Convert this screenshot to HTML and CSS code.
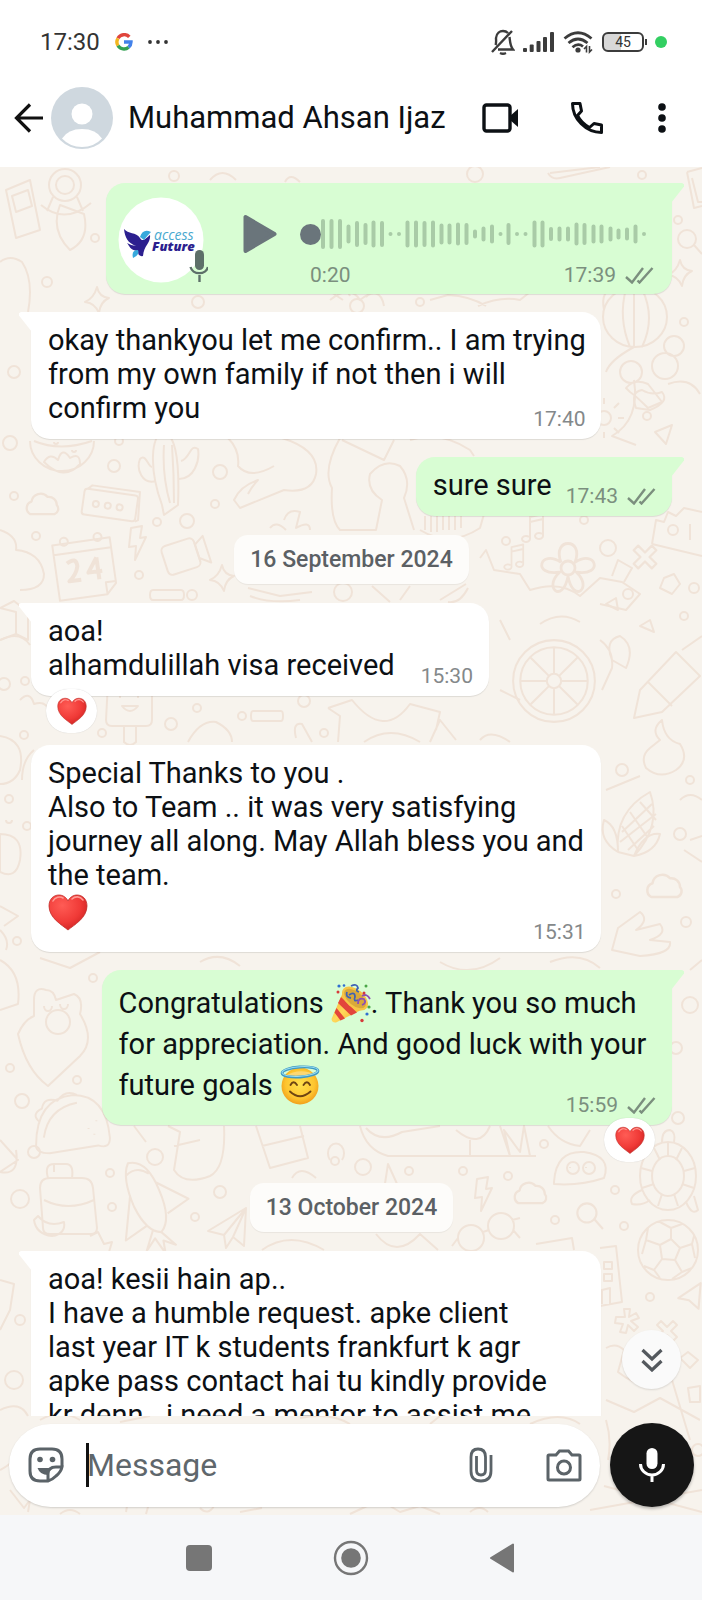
FILE: index.html
```html
<!DOCTYPE html>
<html lang="en">

<head>
    <meta charset="UTF-8">
    <meta name="viewport" content="width=device-width, initial-scale=1.0">
    <title>Muhammad Ahsan Ijaz</title>
    <link rel="stylesheet" href="styles.css">
</head>

<body>
    <!-- Shared icons -->
    <svg class="defs" width="0" height="0" aria-hidden="true">
        <defs>
            <radialGradient id="heart-fill" cx="0.35" cy="0.3" r="0.8">
                <stop offset="0" stop-color="#ff5c55" />
                <stop offset="0.6" stop-color="#f03a37" />
                <stop offset="1" stop-color="#c9201f" />
            </radialGradient>
            <radialGradient id="face-fill" cx="0.5" cy="0.45" r="0.6">
                <stop offset="0" stop-color="#ffe14d" />
                <stop offset="0.65" stop-color="#fdc52f" />
                <stop offset="1" stop-color="#ee9416" />
            </radialGradient>
            <linearGradient id="cone-fill" x1="0" y1="0" x2="1" y2="1">
                <stop offset="0" stop-color="#f5a623" />
                <stop offset="0.5" stop-color="#ffd95c" />
                <stop offset="1" stop-color="#f0a01c" />
            </linearGradient>
            <symbol id="heart" viewBox="0 0 40 40">
                <path d="M20 38C14 33 1 26 1 14C1 7 5.500 3 11 3C15 3 18.500 5.500 20 9C21.500 5.500 25 3 29 3C34.500 3 39 7 39 14C39 26 26 33 20 38Z" fill="url(#heart-fill)" stroke="#c0302c" stroke-width="0.8" />
                <path d="M5 9C7 5 12 4 15 6" fill="none" stroke="#ff9a94" stroke-width="1.600" stroke-linecap="round" />
                <path d="M24 7C27 4 32 4 35 8" fill="none" stroke="#ff9a94" stroke-width="1.600" stroke-linecap="round" />
            </symbol>
            <symbol id="ticks" viewBox="0 0 30 18">
                <path d="M2 11L8 16.500L19 2M13.500 14.500L15.500 16.500L28.500 2" fill="none" stroke="currentColor" stroke-width="2.400" />
            </symbol>
            <symbol id="mic" viewBox="0 0 26 36">
                <rect x="7.500" y="1" width="11" height="21" rx="5.500" fill="currentColor" />
                <path d="M1.500 17A11.500 11 0 0 0 24.500 17M13 28V35" fill="none" stroke="currentColor" stroke-width="3" />
            </symbol>
            <!-- wallpaper doodles -->
            <symbol id="d-bolt" viewBox="-15 -20 30 40" overflow="visible"><path d="M-6-15L5-17L3-5L9-6L-2 17L-1 3L-8 4Z" /></symbol>
            <symbol id="d-star" viewBox="-15 -15 30 30" overflow="visible"><path d="M0-13Q2-3 12-2Q3 2 2 13Q-2 3-12 2Q-3-2 0-13Z" /></symbol>
            <symbol id="d-cloud" viewBox="-20 -15 40 30" overflow="visible"><path d="M-11 8A6 6 0 0 1-10-3A8 8 0 0 1 4-7A7 7 0 0 1 12 0A5 5 0 0 1 10 8Z" /></symbol>
            <symbol id="d-glass" viewBox="-15 -15 30 30" overflow="visible"><path d="M6 5L14 14M-10-1a9 9 0 1 0 18 0a9 9 0 1 0-18 0" /></symbol>
            <symbol id="d-note" viewBox="-15 -20 30 40" overflow="visible"><path d="M-5 10V-12L8-15V7M-5-7L8-10M-5 10a4 3 0 1 1-1-2M8 7a4 3 0 1 1-1-2" /></symbol>
            <symbol id="d-flower" viewBox="-20 -20 40 40" overflow="visible"><path d="M-5 0a5 5 0 1 0 10 0a5 5 0 1 0-10 0M-5-4C-12-22 12-22 5-4C20-14 26 6 6 3C18 14 4 26 0 6C-4 26-18 14-6 3C-26 6-20-14-5-4" /></symbol>
            <symbol id="d-plane" viewBox="-20 -20 40 40" overflow="visible"><path d="M18-20L-20 3L-4 7L-2 20L5 9L16 18ZM18-20L-4 7M5 9L18-20" /></symbol>
            <symbol id="d-tri" viewBox="-15 -15 30 30" overflow="visible"><path d="M-11 2L10-12L8 12L-1 4Z" /></symbol>
            <symbol id="d-cross" viewBox="-15 -15 30 30" overflow="visible"><path d="M-10-6L-6-10L0-4L6-10L10-6L4 0L10 6L6 10L0 4L-6 10L-10 6L-4 0Z" /></symbol>
            <symbol id="d-aster" viewBox="-15 -15 30 30" overflow="visible"><path d="M-2-4L-3-12H3L2-4L9-8L12-3L4 0L11 6L7 10L1 4L-1 12L-7 11L-4 3L-12 2L-11-4Z" /></symbol>
            <symbol id="d-cactus" viewBox="-35 -45 70 90" overflow="visible"><path d="M-8 30C-22-8-18-40-8-42C4-44 10-20 8 30L-6 40ZM-14 6C-28 10-34-6-30-16C-24-22-22-8-18-8M9 4C24 4 30-14 28-26C20-32 20-16 11-14M-6-30Q-8 0 0 28M2-30Q4 0 4 28" /></symbol>
            <symbol id="d-bag" viewBox="-35 -40 70 80" overflow="visible"><path d="M-28-14Q-28-24-18-24H14Q24-24 25-14L29 26Q29 32 23 32H-18Q-25 32-25 26ZM-24-2Q0 10 26-2M-20-24Q-24-38-14-38H-2Q6-38 4-24M-14-38V-30M-30 14Q-20 26-4 20Q-2 32-16 34Q-32 32-34 18Z" /></symbol>
            <symbol id="d-rocket" viewBox="-35 -45 70 90" overflow="visible"><path d="M-24-40Q-6-44 6-14Q18 14 8 26Q-6 26-18 2Q-30-26-24-40ZM-26-28Q-16-38-4-30M2-22L34-6L14 8M-22-8L-26 34L-6 20M8 26L22 38L10 34L12 46L2 32L-6 44L0 24" /></symbol>
            <symbol id="d-wheel" viewBox="-45 -45 90 90" overflow="visible"><path d="M-40 0a40 40 0 1 0 80 0a40 40 0 1 0-80 0M-33 0a33 33 0 1 0 66 0a33 33 0 1 0-66 0M-7 0a7 7 0 1 0 14 0a7 7 0 1 0-14 0M0-7V-33M0 7V33M7 0H33M-7 0H-33M5-5L23-23M-5 5L-23 23M5 5L23 23M-5-5L-23-23" /></symbol>
            <symbol id="d-ball" viewBox="-32 -32 64 64" overflow="visible"><path d="M-30 0a30 30 0 1 0 60 0a30 30 0 1 0-60 0M-8-5L3-11L12-2L7 10L-6 9ZM3-11V-22M12-2L24-6M7 10L14 22M-6 9L-14 20M-8-5L-22-10M-8-28L3-22L14-26M24-6L27 8M24-6L26-14M14 22L4 29M14 22L24 18M-14 20L-24 16M-14 20L-8 28M-22-10L-26 4M-22-10L-20-22" /></symbol>
            <symbol id="d-pizza" viewBox="-40 -35 80 70" overflow="visible"><path d="M-38 20Q-38-28 0-32Q34-32 38 12Q38 24 26 20L-24 28Q-38 28-38 20ZM-30 12Q-26-18 4-24M-34-4Q-44-12-32-18Q-30-30-16-26Q-8-38 4-32M16 2v1M24-6v1M22 8v1" /></symbol>
            <symbol id="d-corn" viewBox="-35 -40 70 80" overflow="visible"><path d="M-14 22Q-18-18 18-38Q30-4 2 26ZM-14 22Q-34 10-28-10Q-14-4-14 22ZM2 26Q24 22 28 4Q12 2 2 26ZM-10 2L20-26M-12 12L24-16M-4 20L22-4M-2-18L16 8M8-28L24-10M-10-4L6 20" /></symbol>
            <symbol id="d-pop" viewBox="-25 -40 50 80" overflow="visible"><path d="M-22-30Q-22-38 0-38Q22-38 22-26V8Q22 14 16 14H-18Q-24 14-24 8ZM-6 14V30Q0 36 6 30V14M-10-16v2M8-16v2M-8-6Q0 4 8-6Z" /></symbol>
        </defs>
    </svg>

    <div class="phone">
        <!-- Status bar -->
        <div class="status-bar">
            <div class="status-left">
                <span>17:30</span>
                <svg width="18" height="18" viewBox="0 0 18 18" fill="none" stroke-width="3.400">
                    <path d="M14.300 3.900A7 7 0 0 0 3 5.300" stroke="#e0453c" />
                    <path d="M3 5.300A7 7 0 0 0 3 12.700" stroke="#f3b61f" />
                    <path d="M3 12.700A7 7 0 0 0 13.600 14.200" stroke="#34a253" />
                    <path d="M13.600 14.200A7 7 0 0 0 16 9H9" stroke="#4382ea" />
                </svg>
                <svg width="20" height="6" viewBox="0 0 20 6" fill="#333">
                    <circle cx="2" cy="3" r="1.900" /><circle cx="10" cy="3" r="1.900" /><circle cx="18" cy="3" r="1.900" />
                </svg>
            </div>
            <div class="status-right">
                <svg width="24" height="26" viewBox="0 0 24 26" fill="none" stroke="#3c3c3c" stroke-width="2.400">
                    <path d="M1 23L21 2M4.500 16C5.500 14 5 11 5 9C5.500 4 9 2 12 2C14 2 15.500 2.500 17 4M18.500 8C19 12 19 17 22 20.500H7M9 24Q12 25.500 15 24" />
                </svg>
                <svg width="32" height="22" viewBox="0 0 32 22" fill="#3c3c3c">
                    <rect x="0" y="17" width="4" height="4" rx="1" /><rect x="6.700" y="13.500" width="4" height="7.500" rx="1" /><rect x="13.500" y="10" width="4" height="11" rx="1" /><rect x="20" y="6" width="4" height="15" rx="1" /><rect x="27" y="1" width="4" height="20" rx="1" />
                </svg>
                <svg width="30" height="24" viewBox="0 0 30 24" fill="none" stroke="#3c3c3c" stroke-width="2.800">
                    <path d="M1.500 8.500Q15-3 28.500 8.500M5.500 13Q15 5 24.500 13M9.500 17.200Q15 12.500 20 16.500" />
                    <circle cx="15" cy="20" r="2.600" fill="#3c3c3c" stroke="none" />
                    <path d="M23.500 22.500V16.500L21 19M26.500 16V22L29 19.500" stroke-width="1.600" />
                </svg>
                <span class="battery">45</span>
                <span class="cam-dot"></span>
            </div>
        </div>

        <!-- Chat header -->
        <header class="chat-header">
            <button class="icon-btn back" aria-label="Back">
                <svg width="30" height="30" viewBox="0 0 30 30" fill="none" stroke="#111" stroke-width="3.200"><path d="M29 15H3M16 1.500L2.500 15L16 28.500" /></svg>
            </button>
            <svg class="avatar" width="62" height="62" viewBox="0 0 62 62">
                <circle cx="31" cy="31" r="31" fill="#cfd8df" />
                <circle cx="31" cy="27" r="10.500" fill="#fff" />
                <path d="M11 51.500Q17 42 31 42Q45 42 51 51.500Q43 60 31 60Q19 60 11 51.500Z" fill="#fff" />
            </svg>
            <h1 class="contact-name">Muhammad Ahsan Ijaz</h1>
            <button class="icon-btn video" aria-label="Video call">
                <svg width="37" height="30" viewBox="0 0 37 30"><rect x="2" y="2" width="26" height="26" rx="2.500" fill="none" stroke="#0c1014" stroke-width="3.400" /><path d="M28 13L36 6V24L28 17Z" fill="#0c1014" /></svg>
            </button>
            <button class="icon-btn call" aria-label="Voice call">
                <svg width="34" height="34" viewBox="0 0 34 34" fill="none" stroke="#0c1014" stroke-width="3" stroke-linejoin="round"><path d="M2.500 2.500H10L11.500 10L7.500 14.500C10 19.500 14.500 24 19.500 26.500L24 22.500L31.500 24V31.500C16 31.500 2.500 18 2.500 2.500Z" /></svg>
            </button>
            <button class="icon-btn more" aria-label="More options">
                <svg width="8" height="30" viewBox="0 0 8 30" fill="#0c1014"><circle cx="4" cy="4" r="3.800" /><circle cx="4" cy="15" r="3.800" /><circle cx="4" cy="26" r="3.800" /></svg>
            </button>
        </header>

        <main class="chat">
            <svg class="wallpaper" viewBox="0 167 702 1348" preserveAspectRatio="xMidYMin slice" aria-hidden="true">
                <!-- top -->
                <g transform="translate(65 185)"><path d="M-16 0a16 16 0 1 0 32 0a16 16 0 1 0-32 0M-9 0a9 9 0 1 0 18 0a9 9 0 1 0-18 0M-12 12L-18 26M12 12L18 26M-24 20Q0 40 26 18" /></g>
                <path d="M6 190L30 180L40 230L16 238ZM12 196L28 190L32 206L16 212ZM550 173L600 167M548 173Q552 180 560 178L610 167M687 172L702 168M687 172L694 208L702 206M692 178L698 202H702M0 262Q10 254 22 262Q34 280 28 312M60 205Q50 230 70 250Q90 240 84 214Z" />
                <path d="M210 180Q222 166 236 180M285 182Q290 172 300 182M330 300Q350 284 360 300Q380 284 384 306M350 306a7 7 0 1 0 14 0a7 7 0 1 0-14 0M343 300L328 290M350 296L346 288M366 297L374 289M478 306Q500 296 520 300L530 292M430 300L448 295Q470 296 486 306" />
                <path d="M603 317a32 30 0 1 0 64 0a32 30 0 1 0-64 0M626 289Q618 318 630 347M642 289Q656 318 642 347M634 287V347M634 347Q610 360 606 372M604 310Q600 290 616 286" />
                <use href="#d-glass" x="673" y="225" width="30" height="30" />
                <use href="#d-star" x="665" y="258" width="30" height="30" />
                <use href="#d-star" x="82" y="285" width="30" height="30" />
                <!-- first rows -->
                <path d="M620 372a11 11 0 1 1 22 0a11 11 0 1 1-22 0M652 366a13 13 0 1 1 26 0a13 13 0 1 1-26 0M626 388Q634 378 648 384L662 402L648 408Q636 396 630 392ZM668 384Q690 376 700 394M636 408Q630 392 642 390Q652 396 662 392Q670 402 650 410ZM664 346a10 10 0 1 1 20 0a10 10 0 1 1-20 0M655 432L672 425L666 444Z" />
                <path d="M597 418a6 6 0 1 1 14 0a6 6 0 1 1-14 0M604 404v-6M604 432v6M590 418h-6M618 418h6M594 408l-5-5M614 408l5-5M594 428l-5 5M614 428l5 5M636 445L612 436Q640 420 634 380" />
                <path d="M30 441a32 30 0 1 0 64 0M44 462Q50 452 58 460Q62 446 70 458Q80 452 80 464Q64 482 44 462ZM54 442a2 2 0 1 0 4 0M72 450a2 2 0 1 0 4 0M34 441Q60 452 92 441" />
                <use href="#d-cactus" x="135" y="430" width="70" height="90" />
                <g transform="translate(110 504) rotate(8)"><rect x="-27" y="-12" width="54" height="26" rx="3" /><circle cx="-14" cy="2" r="3" /><circle cx="-2" cy="2" r="3" /><circle cx="10" cy="2" r="3" /><path d="M-24-12L-20-16H28L30 12L27 14" /></g>
                <use href="#d-cloud" x="20" y="487" width="46" height="36" />
                <path d="M228 438Q240 450 238 466Q250 480 274 466M282 438Q320 450 316 474Q312 494 284 490L240 508L234 500Q240 486 258 480Q252 486 248 494M340 438Q322 470 332 488Q330 520 340 530H376L382 500Q366 490 370 474Q384 458 400 466Q412 480 404 498L414 530M342 440L384 460L394 440M410 440Q440 430 470 450L474 456M284 520Q288 508 300 512L296 528Q310 520 310 530M270 528Q276 520 286 530M425 516V530M431 516V532M437 516V532M443 516V530M449 516V530M455 516V530M461 516V528M420 530Q450 548 480 528L484 514" />
                <g transform="translate(85 563) rotate(-8)"><path d="M-30-22H28V24L18 34H-30ZM28 22H18V34M-30-12H28" /><circle cx="-18" cy="-24" r="4" /><circle cx="16" cy="-24" r="4" /><path d="M-18-2Q-8-8-8 2Q-10 10-18 16H-6M12-4L2 10H16M12-4V18" stroke-width="4" /></g>
                <use href="#d-bolt" x="122" y="523" width="30" height="40" />
                <g transform="translate(186 556) rotate(-18)"><rect x="-22" y="-16" width="34" height="30" rx="5" /><path d="M12-8L22-14V14L12 6M12-10V10" /></g>
                <path d="M0 530Q18 536 16 550Q40 552 44 574Q44 590 20 590M0 608L14 601L28 612V640L16 634L0 640M16 634V612L0 608M153 590h28q3 0 3 5t-3 5h-28q-3 0-3-5t3-5M248 588L280 596L312 592M250 596Q270 604 300 600M372 586L390 602M400 600L410 586M440 600L466 584M448 602Q460 604 468 588" />
                <use href="#d-star" x="207" y="563" width="30" height="30" />
                <use href="#d-note" x="520" y="509" width="30" height="40" />
                <use href="#d-note" x="502" y="540" width="28" height="36" />
                <use href="#d-flower" x="540" y="540" width="56" height="56" />
                <use href="#d-cross" x="628" y="540" width="34" height="34" />
                <path d="M652 544L656 520L664 522L668 512L676 516L684 508L702 512M652 544L702 556M668 530a5 5 0 1 0 10 0a5 5 0 1 0-10 0M690 524V540M480 558L486 550L494 570L520 574L530 590Q560 580 580 596L600 578L622 582L640 594L626 610L600 604M612 576L618 560L632 568L624 582M664 578L674 574L680 584L672 594L660 588Z" />
                <!-- middle -->
                <use href="#d-wheel" x="508" y="635" width="92" height="92" />
                <path d="M500 690L520 700M500 620L510 640M600 640Q614 650 612 668L602 690M540 624Q560 610 580 622M606 604L616 598L618 610ZM640 690L676 652L700 676L662 712L634 718ZM648 682L672 706M682 650L702 636M640 626L650 620L654 632ZM612 660Q604 640 620 636Q636 646 626 668Z" />
                <use href="#d-pop" x="105" y="672" width="50" height="80" />
                <path d="M0 640Q20 630 30 645M20 700Q30 690 34 704Q46 700 50 712M253 711h28q2 0 2 5t-2 5h-28q-2 0-2-5t2-5M188 742Q200 720 216 722Q232 730 232 742M328 708L352 700Q384 740 410 704L440 712L436 730M328 708L340 716L338 742M296 738Q292 722 302 724L312 742M364 742Q390 724 420 742M480 740Q490 728 510 742M0 736Q26 740 20 770Q14 784 0 784M22 780Q22 760 34 750M430 742L440 720L456 740" />
                <path d="M0 834Q24 834 20 860Q16 880 0 872ZM0 906L18 916L4 926M6 820a3 3 0 1 0 6 0M0 930Q10 940 6 950M660 740Q650 730 662 720Q664 740 680 744Q690 760 676 770Q660 780 646 768Q640 756 650 748ZM606 790L640 776" />
                <use href="#d-corn" x="597" y="790" width="70" height="80" />
                <use href="#d-cloud" x="640" y="868" width="50" height="38" />
                <path d="M618 928L640 912Q650 920 636 930L660 924Q668 934 650 940L670 942Q672 954 640 956L612 950ZM0 960Q22 972 18 1004L0 1010M690 840L702 836M684 850L702 862M680 800Q690 790 702 800M40 958L70 968L100 952M200 962Q220 950 240 966M440 962Q470 980 500 958M550 962Q580 950 600 968M690 970L702 960" />
                <!-- lower -->
                <path d="M34 1000Q34 986 46 990Q54 990 56 1000L74 994Q84 998 80 1014Q96 1040 80 1056L48 1086Q26 1070 18 1034Q24 1020 34 1016ZM46 1022a12 12 0 1 0 24 0a12 12 0 1 0-24 0M44 1006a4 5 0 1 0 8 0M60 1004a4 5 0 1 0 8 0" />
                <use href="#d-pizza" x="32" y="1092" width="82" height="68" />
                <path d="M134 1126L146 1142M136 1124L144 1120M168 1126L180 1132L174 1170Q184 1186 210 1176Q226 1168 224 1126M174 1146L200 1140M256 1126L270 1168L308 1158L300 1126M262 1146L304 1136M360 1126Q366 1150 388 1156H536M366 1128Q380 1144 402 1132L440 1126M470 1140V1156M500 1126L510 1156L504 1130L520 1152L524 1126L530 1156M456 1130Q480 1150 490 1126M548 1126Q560 1144 580 1146L590 1130M0 1140L18 1160L0 1172M0 1172Q20 1176 16 1150" />
                <path d="M554 1182Q556 1150 584 1152Q612 1156 604 1178Q580 1186 554 1184ZM567 1168a6 6 0 1 0 12 0a6 6 0 1 0-12 0M583 1168a6 6 0 1 0 12 0a6 6 0 1 0-12 0M570 1167v1M586 1167v1" />
                <g transform="translate(668 1176)"><ellipse rx="28" ry="34" /><ellipse rx="16" ry="20" /><path d="M0-34V-20M14-28L8-16M-14-28L-8-16M27-8L16-5M-27-8L-16-5M26 12L14 8M-26 12L-14 8M10 30L6 18M-10 30L-6 18M-6-34Q-6-46 2-46Q8-44 6-34M-26 14Q-40 20-36 28Q-26 30-18 24M18 26Q24 40 30 34L26 20M-24-18Q-36-24-32-30Q-24-32-16-26" /></g>
                <use href="#d-bag" x="33" y="1162" width="70" height="80" />
                <use href="#d-rocket" x="115" y="1158" width="76" height="94" />
                <use href="#d-plane" x="208" y="1208" width="40" height="40" />
                <use href="#d-bolt" x="468" y="1174" width="30" height="40" />
                <use href="#d-cloud" x="508" y="1176" width="46" height="36" />
                <use href="#d-glass" x="572" y="1198" width="32" height="32" />
                <path d="M458 1238a13 13 0 1 1 26 0a13 13 0 1 1-26 0M488 1226a13 13 0 1 1 26 0a13 13 0 1 1-26 0M483 1232L489 1230M513 1230L520 1238M458 1238L452 1246M512 1220L520 1218M384 1190L388 1164L398 1186ZM292 1178Q300 1164 316 1178M330 1160a8 10 0 1 1 12 0M90 1236L98 1232L104 1244L112 1242L106 1262M262 1250Q290 1230 324 1250M376 1234Q396 1260 420 1234L438 1250M536 1244L572 1238L574 1250M600 1248L616 1246L622 1302L600 1306M604 1262h8v7h-8ZM604 1274h8v7h-8ZM602 1304V1290L610 1288V1304" />
                <use href="#d-ball" x="636" y="1218" width="64" height="64" />
                <use href="#d-aster" x="612" y="1306" width="30" height="30" />
                <use href="#d-cross" x="652" y="1316" width="30" height="30" />
                <use href="#d-tri" x="674" y="1280" width="32" height="32" />
                <path d="M606 1348Q616 1342 624 1350L618 1372Q640 1390 664 1384Q680 1370 670 1352M606 1400L634 1412L660 1398L700 1420M680 1358L688 1352L698 1360L690 1368ZM688 1388L700 1386V1402H690ZM672 1380L690 1440M606 1420Q612 1440 608 1460M0 1280L14 1284L10 1310L0 1330M0 1410Q20 1400 28 1416M0 1470Q20 1460 26 1440M10 1490L24 1508L30 1500L28 1512M60 1514Q70 1506 80 1514M128 1500L126 1512M150 1500L146 1514M200 1508Q208 1516 214 1506M240 1512L262 1508M350 1514L380 1500L400 1512L420 1506L440 1514M470 1512Q480 1504 488 1512M590 1510L702 1490M604 1486L702 1512M40 1420Q60 1408 80 1420M120 1422L150 1416M300 1418Q330 1412 350 1424M430 1424L440 1416M530 1424Q560 1410 580 1424" />
                <!-- loose dots -->
                <g>
                    <circle cx="47" cy="282" r="5" /><circle cx="95" cy="238" r="4" /><circle cx="174" cy="176" r="5" /><circle cx="475" cy="174" r="8" /><circle cx="642" cy="175" r="4" /><circle cx="678" cy="220" r="4" /><circle cx="420" cy="302" r="4" /><circle cx="198" cy="302" r="6" />
                    <circle cx="684" cy="322" r="4" /><circle cx="10" cy="443" r="7" /><circle cx="119" cy="441" r="4" /><circle cx="114" cy="466" r="6" /><circle cx="220" cy="472" r="7" /><circle cx="215" cy="504" r="4" /><circle cx="14" cy="496" r="4" /><circle cx="187" cy="521" r="7" /><circle cx="157" cy="522" r="4" /><circle cx="36" cy="536" r="4" /><circle cx="139" cy="575" r="4" /><circle cx="192" cy="595" r="5" />
                    <circle cx="647" cy="416" r="4" /><circle cx="14" cy="372" r="6" /><circle cx="506" cy="541" r="4" /><circle cx="608" cy="548" r="8" /><circle cx="584" cy="520" r="4" /><circle cx="628" cy="594" r="5" /><circle cx="694" cy="588" r="5" /><circle cx="343" cy="592" r="9" /><circle cx="684" cy="616" r="4" />
                    <circle cx="25" cy="681" r="4" /><circle cx="4" cy="684" r="6" /><circle cx="197" cy="708" r="4" /><circle cx="242" cy="716" r="4" /><circle cx="304" cy="701" r="6" /><circle cx="171" cy="724" r="6" /><circle cx="102" cy="733" r="4" /><circle cx="24" cy="735" r="4" /><circle cx="324" cy="733" r="4" /><circle cx="9" cy="799" r="4" /><circle cx="27" cy="826" r="4" /><circle cx="17" cy="941" r="4" /><circle cx="622" cy="770" r="6" /><circle cx="690" cy="780" r="4" /><circle cx="680" cy="834" r="6" /><circle cx="616" cy="894" r="4" /><circle cx="686" cy="922" r="5" />
                    <circle cx="93" cy="978" r="4" /><circle cx="77" cy="1080" r="4" /><circle cx="22" cy="1101" r="7" /><circle cx="10" cy="1068" r="4" /><circle cx="34" cy="1152" r="6" /><circle cx="155" cy="1157" r="8" /><circle cx="110" cy="1173" r="4" /><circle cx="20" cy="1199" r="9" /><circle cx="220" cy="1192" r="6" /><circle cx="335" cy="1161" r="4" /><circle cx="363" cy="1167" r="8" /><circle cx="409" cy="1171" r="4" /><circle cx="463" cy="1171" r="4" /><circle cx="508" cy="1176" r="4" /><circle cx="195" cy="1217" r="4" /><circle cx="112" cy="1207" r="4" /><circle cx="544" cy="1144" r="4" /><circle cx="555" cy="1220" r="4" /><circle cx="624" cy="1226" r="4" /><circle cx="615" cy="1190" r="4" /><circle cx="678" cy="1118" r="6" /><circle cx="676" cy="1048" r="6" /><circle cx="20" cy="1320" r="5" /><circle cx="14" cy="1380" r="9" /><circle cx="650" cy="1297" r="4" /><circle cx="698" cy="1450" r="6" /><circle cx="690" cy="1005" r="8" />
                </g>
            </svg>

            <section class="messages">
                <!-- Voice note -->
                <article class="msg out tail voice">
                    <svg class="voice-logo" width="90" height="86" viewBox="0 0 90 86">
                        <circle cx="43" cy="43" r="42.500" fill="#fff" />
                        <path d="M6 32C10 37 18 35 22 41C25 46 28 41 32 38C33 46 26 48 25 59Q20 60 20 54C11 53 12 49 9 46Q14 49 18 49C10 46 7 41 6 32Z" fill="#2c1f8f" />
                        <path d="M22 40Q25 31 33 35Q29 39 26 43Z" fill="#37a9dc" />
                        <path d="M15 61Q13 53 20 53Q22 58 15 61Z" fill="#37a9dc" />
                        <text class="logo-light" x="36" y="43">access</text>
                        <text class="logo-bold" x="34" y="54">Future</text>
                        <rect x="77" y="53" width="9" height="20" rx="4.500" fill="#5d6f69" />
                        <path d="M72.500 70A9 8 0 0 0 90 70" fill="none" stroke="#5d6f69" stroke-width="2.400" />
                        <path d="M81.500 78V85" stroke="#5d6f69" stroke-width="2.400" />
                    </svg>
                    <button class="icon-btn play" aria-label="Play voice message">
                        <svg width="34" height="40" viewBox="0 0 34 40"><path d="M2.500 3V37L31.500 20Z" fill="#6a757b" stroke="#6a757b" stroke-width="4" stroke-linejoin="round" /></svg>
                    </button>
                    <div class="voice-body">
                        <div class="seek">
                            <svg width="356" height="40" viewBox="0 0 356 40" fill="none" stroke="#a9cba7" stroke-width="4" stroke-linecap="round">
                                <path d="M25 7v26M33.500 7v26M42 7v26M50.500 12.500v15M59 9v22M67.500 11v18M75.500 8.500v23M84 9v22M92.500 20v0.010M101 20v0.010M109.500 8.500v23M118 8.500v23M126.500 9v22M135 8.500v23M143.500 11.500v17M151.500 11.500v17M160 10.500v19M168.500 11v18M177 17.500v5M185.500 14.500v11M194 12.500v15M202.500 20v0.010M210.500 11v18M219 20v0.010M227.500 20v0.010M236.500 8.500v23M244.500 8.500v23M253 15v10M261.500 14.500v11M270 14.500v11M278.500 10.500v19M286.500 11v18M295.500 12.500v15M303.500 12.500v15M312.500 14.500v11M320.500 16.500v7M329 15.500v9M337.500 12.500v15M346 20v0.010" />
                            </svg>
                            <input type="range" min="0" max="20" value="0" aria-label="Seek">
                        </div>
                        <div class="voice-meta">
                            <span>0:20</span>
                            <span class="stamp">17:39 <svg width="30" height="18"><use href="#ticks" /></svg></span>
                        </div>
                    </div>
                </article>

                <article class="msg in tail">
                    okay thankyou let me confirm.. I am trying from my own family if not then i will confirm you
                    <span class="meta">17:40</span>
                </article>

                <article class="msg out tail">
                    sure sure
                    <span class="meta">17:43 <svg width="30" height="18"><use href="#ticks" /></svg></span>
                </article>

                <div class="date">16 September 2024</div>

                <article class="msg in tail reacted">
                    aoa!<br>
                    alhamdulillah visa received
                    <span class="meta wide">15:30</span>
                    <span class="reaction"><svg width="30" height="30"><use href="#heart" /></svg></span>
                </article>

                <article class="msg in same has-emoji">
                    Special Thanks to you .<br>
                    Also to Team .. it was very satisfying journey all along. May Allah bless you and the team.<br>
                    <svg class="emoji" width="40" height="40"><use href="#heart" /></svg>
                    <span class="meta">15:31</span>
                </article>

                <article class="msg out tail reacted has-emoji tall">
                    Congratulations
                    <svg class="emoji" width="40" height="40" viewBox="0 0 40 40">
                        <path d="M13 7L0.500 36Q1 40 5 39.500L34 25Q32 12 13 7Z" fill="url(#cone-fill)" />
                        <path d="M10 14L26 29.500L20 32.500L7 20ZM5.500 25L14 35.500L9.500 37.500L3.500 29.500Z" fill="#e2453c" />
                        <ellipse cx="24" cy="15.500" rx="14" ry="8" transform="rotate(40 24 15.500)" fill="#d9a93a" />
                        <ellipse cx="24" cy="15.500" rx="14" ry="8" transform="rotate(40 24 15.500)" fill="none" stroke="#f6c546" stroke-width="2.200" />
                        <path d="M18 12Q24 8 24 14Q22 19 27 17M20 3Q26 0 27 5Q24 8 28 9M16 9Q14 14 20 15" fill="none" stroke="#3f62b5" stroke-width="1.800" />
                        <path d="M27 21Q27 14 33 16Q36 20 31 22M31 13Q36 10 39 16" fill="none" stroke="#8d4fb4" stroke-width="1.800" />
                        <g fill="#2f6fd0"><circle cx="8" cy="3" r="1.600" /><circle cx="36" cy="31" r="1.600" /><circle cx="13" cy="2.500" r="1.300" /></g>
                        <g fill="#d63a3a"><circle cx="7" cy="9" r="1.500" /><circle cx="33" cy="10" r="1.500" /><circle cx="31" cy="37.500" r="1.700" /></g>
                        <g fill="#4aa648"><circle cx="35" cy="3" r="1.500" /><circle cx="38" cy="24" r="1.600" /></g>
                    </svg>. Thank you so much for appreciation. And good luck with your future goals
                    <svg class="emoji" width="40" height="40" viewBox="0 0 40 40">
                        <circle cx="20" cy="21" r="18.500" fill="url(#face-fill)" />
                        <path d="M5 11Q20 2 36 10Q22 16 5 11Z" fill="#fbd774" />
                        <ellipse cx="20" cy="7" rx="18" ry="5" transform="rotate(-4 20 7)" fill="none" stroke="#3f9ac4" stroke-width="2.800" />
                        <ellipse cx="20" cy="6.500" rx="18" ry="4.800" transform="rotate(-4 20 6.500)" fill="none" stroke="#9adcf0" stroke-width="1" />
                        <path d="M10.500 20Q13.500 14.500 17 20M23.500 20Q27 14.500 30 20M10 26.500Q20 36 30.500 26.500" fill="none" stroke="#6e4512" stroke-width="1.900" stroke-linecap="round" />
                    </svg>
                    <span class="meta">15:59 <svg width="30" height="18"><use href="#ticks" /></svg></span>
                    <span class="reaction"><svg width="30" height="30"><use href="#heart" /></svg></span>
                </article>

                <div class="date">13 October 2024</div>

                <article class="msg in tail full">
                    aoa! kesii hain ap..<br>
                    I have a humble request. apke client<br>
                    last year IT k students frankfurt k agr<br>
                    apke pass contact hai tu kindly provide<br>
                    kr denn.. i need a mentor to assist me
                </article>

                <button class="icon-btn scroll-down" aria-label="Scroll to bottom">
                    <svg width="22" height="24" viewBox="0 0 22 24" fill="none" stroke="#54595e" stroke-width="3.200"><path d="M1.500 2L11 11L20.500 2M1.500 13L11 22L20.500 13" /></svg>
                </button>
            </section>

            <!-- Composer -->
            <form class="composer">
                <div class="field">
                    <button type="button" class="icon-btn" aria-label="Stickers">
                        <svg width="36" height="36" viewBox="0 0 36 36" fill="none" stroke="#5b6368" stroke-width="3"><path d="M34 20V12Q34 2 24 2H12Q2 2 2 12V24Q2 34 12 34H20Q24 33 28 29Q33 25 34 20H28Q20 20 20 27V34" /><circle cx="12" cy="12.500" r="2.800" fill="#5b6368" stroke="none" /><circle cx="24.500" cy="12.500" r="2.800" fill="#5b6368" stroke="none" /><path d="M9.500 21H26Q20 22 20 28Q12 28 9.500 21Z" fill="#5b6368" stroke="none" /></svg>
                    </button>
                    <span class="caret"></span>
                    <input class="message-input" type="text" placeholder="Message" aria-label="Message">
                    <button type="button" class="icon-btn attach" aria-label="Attach">
                        <svg width="24" height="36" viewBox="0 0 24 36" fill="none" stroke="#5b6368" stroke-width="2.800"><path d="M22 8V24Q22 34 12 34Q2 34 2 24V10Q2 2 9 2Q16.500 2 16.500 10V23Q16.500 28 12 28Q7.500 28 7.500 23V9" /></svg>
                    </button>
                    <button type="button" class="icon-btn camera" aria-label="Camera">
                        <svg width="36" height="33" viewBox="0 0 36 33" fill="none" stroke="#5b6368" stroke-width="3"><path d="M2 7Q2 6 3 6H10L13.500 2H22.500L26 6H33Q34 6 34 7V30Q34 31 33 31H3Q2 31 2 30Z" /><circle cx="18" cy="18.500" r="6.500" /></svg>
                    </button>
                </div>
                <button type="button" class="icon-btn record" aria-label="Record voice message">
                    <svg width="26" height="36"><use href="#mic" /></svg>
                </button>
            </form>
        </main>

        <!-- Android navigation -->
        <nav class="nav-bar">
            <button class="icon-btn" aria-label="Recents"><svg width="26" height="26"><rect width="26" height="26" rx="4" fill="#767676" /></svg></button>
            <button class="icon-btn" aria-label="Home"><svg width="36" height="36" viewBox="0 0 36 36"><circle cx="18" cy="18" r="16" fill="none" stroke="#767676" stroke-width="2.400" /><circle cx="18" cy="18" r="9.800" fill="#767676" /></svg></button>
            <button class="icon-btn" aria-label="Back"><svg width="26" height="30" viewBox="0 0 26 30"><path d="M24 1.500V28.500L2 15Z" fill="#767676" stroke="#767676" stroke-width="2" stroke-linejoin="round" /></svg></button>
        </nav>
    </div>
</body>

</html>
```
FILE: styles.css
```css
* {
    box-sizing: border-box;
}

body {
    margin: 0;
    font-family: Roboto, "Liberation Sans", sans-serif;
    color: #0c1014;
    background: #fff;
}

svg {
    display: block;
    flex: none;
}

.defs {
    position: absolute;
}

.phone {
    height: 100vh;
    display: flex;
    flex-direction: column;
}

.icon-btn {
    flex: none;
    display: grid;
    place-items: center;
    padding: 0;
    border: 0;
    background: none;
    color: inherit;
    cursor: pointer;
}

/* Status bar */
.status-bar {
    height: 69px;
    padding: 14px 35px 0 40px;
    display: flex;
    align-items: center;
    justify-content: space-between;
    font-size: 24px;
    color: #333;
}

.status-left,
.status-right {
    display: flex;
    align-items: center;
}

.status-left {
    gap: 15px;
}

.status-right {
    gap: 8px;
}

.battery {
    position: relative;
    width: 42px;
    height: 20px;
    margin: 0 3px 0 1px;
    border: 2px solid #3c3c3c;
    border-radius: 6px;
    background: linear-gradient(90deg, #d8d8d8 45%, #fff 45%);
    font-size: 14px;
    line-height: 16px;
    text-align: center;
}

.battery::after {
    content: "";
    position: absolute;
    right: -5px;
    top: 5px;
    width: 2px;
    height: 6px;
    background: #3c3c3c;
}

.cam-dot {
    width: 12px;
    height: 12px;
    border-radius: 50%;
    background: #33cf62;
}

/* Header */
.chat-header {
    height: 98px;
    padding: 0 36px 0 14px;
    display: flex;
    align-items: center;
}

.avatar {
    margin-left: 7px;
}

.contact-name {
    flex: 1;
    margin: 0 0 0 15px;
    font-size: 31px;
    line-height: 36px;
    font-weight: 400;
    white-space: nowrap;
}

.call {
    margin-left: 51px;
}

.more {
    margin-left: 54px;
}

/* Chat */
.chat {
    position: relative;
    flex: 1;
    min-height: 0;
    display: flex;
    flex-direction: column;
    background: #f7f3ed;
}

.wallpaper {
    position: absolute;
    inset: 0;
    width: 100%;
    height: 100%;
    fill: none;
    stroke: #f0e3d8;
    stroke-width: 2;
    stroke-linejoin: round;
}

.messages {
    position: relative;
    flex: 1;
    min-height: 0;
    overflow: hidden;
    padding: 0 30px 0 31px;
    display: flex;
    flex-direction: column;
    align-items: flex-start;
}

.msg {
    position: relative;
    flex: none;
    display: flow-root;
    max-width: 89%;
    margin-top: 18px;
    padding: 11px 14px 9px 17px;
    border-radius: 19px;
    background: #fff;
    box-shadow: 0 1px 1px rgba(0, 0, 0, 0.1);
    font-size: 29px;
    line-height: 34px;
}

.msg.out {
    align-self: flex-end;
    background: #d8fdd3;
}

.msg.full {
    width: 89%;
}

.msg.in.tail {
    border-top-left-radius: 0;
}

.msg.out.tail {
    border-top-right-radius: 0;
}

.tail::before {
    content: "";
    position: absolute;
    top: 0;
    width: 13px;
    height: 20px;
}

.in.tail::before {
    left: -12px;
    background: #fff;
    clip-path: polygon(15% 0, 100% 0, 100% 100%, 0 18%, 0 6%);
}

.out.tail::before {
    right: -12px;
    background: #d8fdd3;
    clip-path: polygon(85% 0, 0 0, 0 100%, 100% 18%, 100% 6%);
}

.msg.same {
    margin-top: 10px;
}

.reacted {
    margin-bottom: 39px;
}

.meta,
.stamp {
    display: flex;
    align-items: center;
    gap: 8px;
    font-size: 21px;
    line-height: 22px;
    color: #84888a;
}

.meta {
    float: right;
    margin: 17px 2px 0 14px;
}

.meta.wide {
    margin-left: 26px;
}

.out .meta,
.voice-meta .stamp {
    color: #7b8f7e;
}

.emoji {
    display: inline-block;
    vertical-align: -10px;
}

.has-emoji .meta {
    margin-top: 29px;
}

.msg.tall {
    padding-top: 13px;
    line-height: 41px;
}

.reaction {
    position: absolute;
    bottom: -37px;
    left: 15px;
    width: 51px;
    height: 44px;
    display: grid;
    place-items: center;
    border-radius: 22px;
    background: #fff;
    box-shadow: 0 0 1px rgba(0, 0, 0, 0.2);
}

.out .reaction {
    left: auto;
    right: 17px;
}

.date {
    flex: none;
    align-self: center;
    margin: 19px 0 1px;
    padding: 0 16px;
    border-radius: 14px;
    background: #fdfcfa;
    box-shadow: 0 1px 1px rgba(0, 0, 0, 0.06);
    font-size: 23px;
    line-height: 49px;
    font-weight: 500;
    color: #5b6064;
}

/* Voice note */
.msg.voice {
    margin-top: 16px;
    padding: 11px 18px 8px 12px;
    display: flex;
    align-items: center;
}

.play {
    margin: 0 21px 12px 35px;
}

.seek {
    display: grid;
    margin-top: 20px;
}

.seek svg,
.seek input {
    grid-area: 1 / 1;
}

.seek input {
    -webkit-appearance: none;
    appearance: none;
    width: 100%;
    height: 40px;
    margin: 0;
    padding-left: 2px;
    background: transparent;
}

.seek input::-webkit-slider-thumb {
    -webkit-appearance: none;
    width: 21px;
    height: 21px;
    border-radius: 50%;
    background: #6a757b;
}

.voice-meta {
    display: flex;
    justify-content: space-between;
    margin-top: 10px;
    padding-left: 12px;
    font-size: 21px;
    line-height: 22px;
    color: #7b8f7e;
}

.logo-light,
.logo-bold {
    font-family: "Open Sans", sans-serif;
    font-style: italic;
}

.logo-light {
    font-size: 14px;
    fill: #49a9cf;
}

.logo-bold {
    font-size: 13px;
    font-weight: 800;
    fill: #2c1f8f;
}

.scroll-down {
    position: absolute;
    right: 21px;
    bottom: 27px;
    width: 59px;
    height: 59px;
    border-radius: 50%;
    background: #fafafa;
    box-shadow: 0 1px 2px rgba(0, 0, 0, 0.12);
}

/* Composer */
.composer {
    position: relative;
    display: flex;
    align-items: center;
    gap: 10px;
    padding: 7px 8px 8px 9px;
}

.field {
    flex: 1;
    min-width: 0;
    height: 83px;
    padding: 0 18px 0 19px;
    display: flex;
    align-items: center;
    border-radius: 42px;
    background: #fff;
    box-shadow: 0 1px 2px rgba(0, 0, 0, 0.15);
}

.caret {
    flex: none;
    width: 3px;
    height: 44px;
    margin: 0 -2px 0 22px;
    background: #111;
}

.message-input {
    flex: 1;
    min-width: 0;
    height: 48px;
    padding: 0;
    border: 0;
    outline: none;
    background: none;
    font-family: inherit;
    font-size: 32px;
    color: #0c1014;
}

.message-input::placeholder {
    color: #5f676c;
    opacity: 1;
}

.camera {
    margin-left: 53px;
}

.record {
    width: 84px;
    height: 84px;
    border-radius: 50%;
    background: #161616;
    color: #fff;
    box-shadow: 0 2px 3px rgba(0, 0, 0, 0.25);
}

/* Navigation bar */
.nav-bar {
    height: 85px;
    padding: 0 187px 0 186px;
    display: flex;
    align-items: center;
    justify-content: space-between;
    background: #f6f7f9;
}
```
